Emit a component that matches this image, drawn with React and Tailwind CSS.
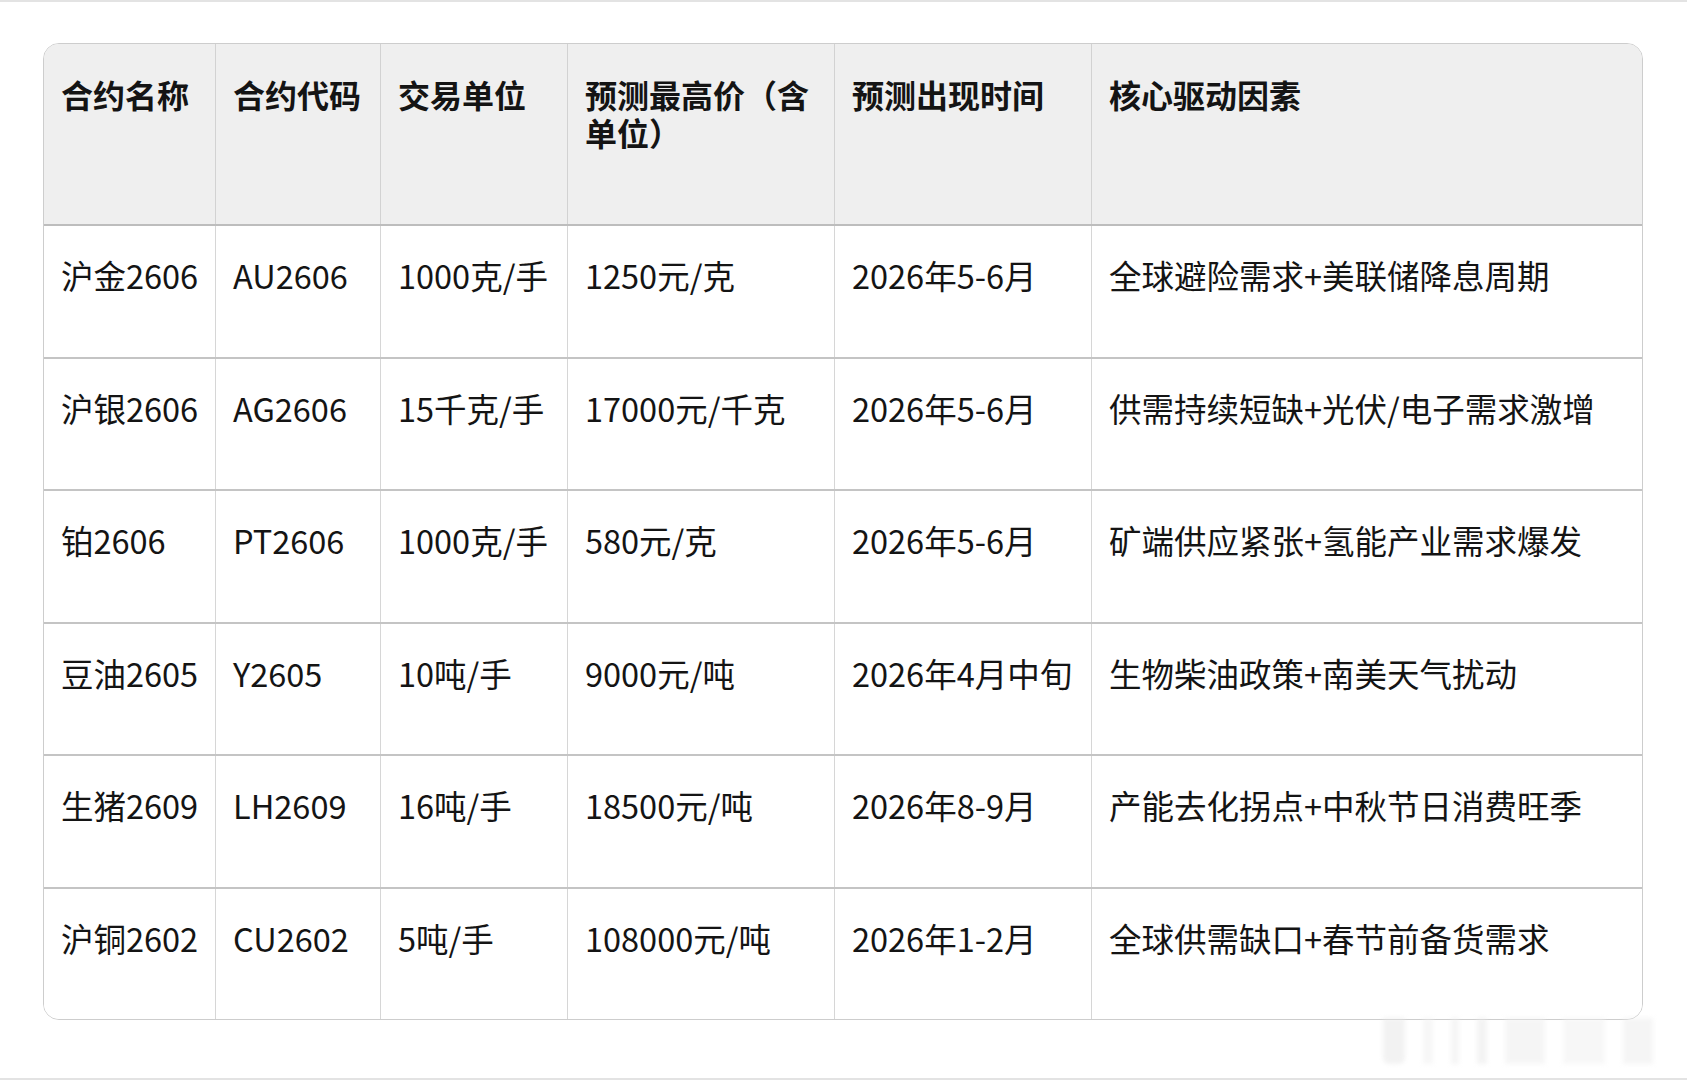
import React from 'react';

const headers = ['合约名称', '合约代码', '交易单位', '预测最高价（含单位）', '预测出现时间', '核心驱动因素'];

const rows = [
  ['沪金2606', 'AU2606', '1000克/手', '1250元/克', '2026年5-6月', '全球避险需求+美联储降息周期'],
  ['沪银2606', 'AG2606', '15千克/手', '17000元/千克', '2026年5-6月', '供需持续短缺+光伏/电子需求激增'],
  ['铂2606', 'PT2606', '1000克/手', '580元/克', '2026年5-6月', '矿端供应紧张+氢能产业需求爆发'],
  ['豆油2605', 'Y2605', '10吨/手', '9000元/吨', '2026年4月中旬', '生物柴油政策+南美天气扰动'],
  ['生猪2609', 'LH2609', '16吨/手', '18500元/吨', '2026年8-9月', '产能去化拐点+中秋节日消费旺季'],
  ['沪铜2602', 'CU2602', '5吨/手', '108000元/吨', '2026年1-2月', '全球供需缺口+春节前备货需求'],
];

const font = { fontFamily: '"Noto Sans CJK SC", "Noto Sans", sans-serif' };

const App = () => {
  return (
    <div
      className="relative w-[1687px] h-[1080px] bg-white border-t-2 border-b-2 border-[#e3e3e3] overflow-hidden"
      style={font}
    >
      <div className="ml-[43px] mt-[41px] w-[1600px] rounded-[16px] border border-[#cdcdcd] overflow-hidden text-[#141414]">
        {/* header */}
        <div className="grid grid-cols-[172px_165px_187px_267px_257px_1fr] bg-[#efefef] border-b-2 border-[#bdbdbd]">
          {headers.map((h, i) => (
            <div
              key={i}
              className={`h-[180px] pl-[17px] pr-[12px] pt-[31px] text-[32px] leading-[38px] font-bold ${
                i < headers.length - 1 ? 'border-r border-[#d2d2d2]' : ''
              }`}
            >
              {h}
            </div>
          ))}
        </div>

        {/* body */}
        {rows.map((row, r) => (
          <div
            key={r}
            className={`grid grid-cols-[172px_165px_187px_267px_257px_1fr] bg-white ${
              r < rows.length - 1 ? 'border-b-2 border-[#c4c4c4]' : ''
            }`}
          >
            {row.map((cell, c) => (
              <div
                key={c}
                className={`h-[130.5px] pl-[17px] pt-[30px] text-[32.5px] leading-[38px] whitespace-nowrap ${
                  c < row.length - 1 ? 'border-r border-[#d6d6d6]' : ''
                }`}
              >
                {cell}
              </div>
            ))}
          </div>
        ))}
      </div>

      {/* faint blurred watermark */}
      <div className="absolute left-[1383px] top-[1016px] flex items-stretch gap-[18px] h-[46px] opacity-50 blur-[2px]">
        <div className="w-[22px] bg-[#e6e6e6] rounded-b-[6px]" />
        <div className="w-[10px] bg-[#efefef]" />
        <div className="w-[8px] bg-[#ececec]" />
        <div className="w-[10px] bg-[#e8e8e8]" />
        <div className="w-[40px] bg-[#ededed]" />
        <div className="w-[42px] bg-[#f0f0f0]" />
        <div className="w-[30px] bg-[#ececec]" />
      </div>
    </div>
  );
};

export default App;
